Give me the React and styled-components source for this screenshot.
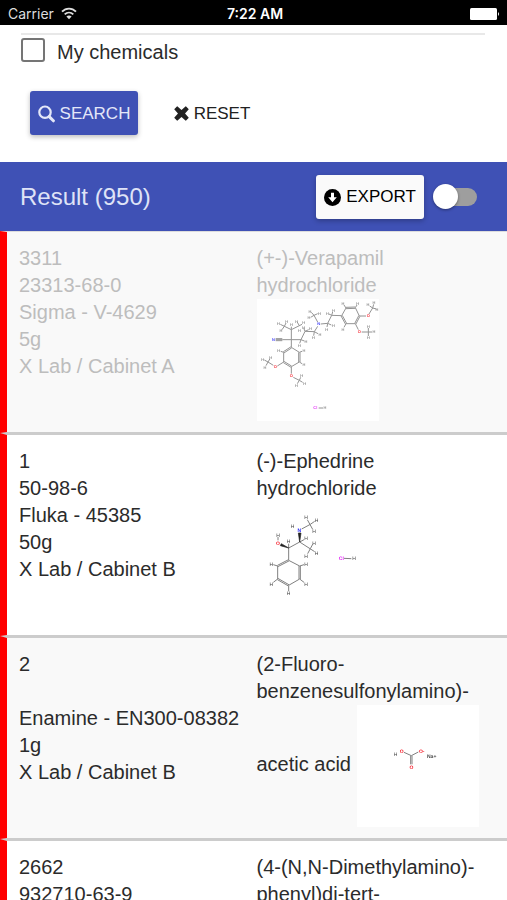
import { useState } from 'react';
import styled, { createGlobalStyle, css } from 'styled-components';

const ATOM_COLORS = { H: '#444', O: '#f5202c', 'O-': '#f5202c', N: '#2020f5', Cl: '#e020f5', 'Na+': '#444' };

// coordinates are in thirds of a pixel, counted from origin
const STRUCTURE_SIZE = 122;
const UNITS = 3;

// bonds: [x1, y1, x2, y2, order], atoms: [label, x, y]
const verapamil = {
  origin: [21, 27],
  labelSize: 4,
  bonds: [
    [124, 172, 148, 187, 1], [148, 187, 148, 216, 2], [148, 216, 124, 230, 1],
    [124, 230, 101, 216, 2], [101, 216, 101, 187, 1], [101, 187, 124, 172, 2],
    [101, 187, 92, 184, 1], [148, 187, 156, 184, 1], [148, 216, 156, 221, 1],
    [101, 216, 82, 228, 1], [70, 226, 54, 216, 1], [54, 216, 43, 210, 1],
    [54, 216, 60, 206, 1], [54, 216, 48, 227, 1],
    [124, 230, 124, 251, 1], [130, 262, 148, 271, 1], [148, 271, 152, 262, 1],
    [148, 271, 158, 277, 1], [148, 271, 142, 281, 1],
    [124, 172, 124, 119, 1], [97, 149, 124, 149, 1], [77, 149, 97, 149, 3],
    [124, 119, 124, 110, 1], [124, 119, 91, 103, 1], [103, 109, 108, 99, 1], [103, 109, 96, 119, 1],
    [124, 119, 156, 103, 1], [148, 107, 142, 97, 1],
    [124, 149, 153, 149, 1], [153, 149, 163, 153, 1], [153, 149, 149, 160, 1],
    [153, 149, 165, 124, 1], [165, 124, 161, 114, 1], [165, 124, 176, 119, 1],
    [165, 124, 193, 125, 1], [193, 125, 191, 137, 1], [193, 125, 204, 131, 1],
    [193, 125, 203, 109, 1], [203, 96, 192, 76, 1], [192, 76, 184, 67, 1],
    [192, 76, 203, 71, 1], [192, 76, 182, 82, 1],
    [212, 102, 233, 100, 1], [233, 100, 231, 111, 1], [233, 100, 244, 105, 1],
    [233, 100, 245, 76, 1], [245, 76, 248, 66, 1], [245, 76, 237, 72, 1],
    [245, 76, 275, 77, 1], [275, 77, 288, 54, 1], [288, 54, 316, 53, 2],
    [316, 53, 328, 78, 1], [328, 78, 316, 101, 2], [316, 101, 288, 101, 1], [288, 101, 275, 77, 2],
    [288, 54, 282, 45, 1], [316, 53, 321, 45, 1], [288, 101, 282, 112, 1],
    [328, 78, 348, 78, 1], [357, 72, 368, 54, 1], [368, 54, 359, 48, 1],
    [368, 54, 371, 43, 1], [368, 54, 379, 57, 1],
    [316, 101, 325, 119, 1], [335, 126, 366, 126, 1], [355, 114, 355, 138, 1],
    [206, 354, 219, 354, 1],
  ],
  atoms: [
    ['H', 86, 182], ['H', 162, 182], ['H', 162, 225], ['O', 76, 231], ['H', 38, 208],
    ['H', 62, 202], ['H', 45, 232], ['O', 124, 258], ['H', 155, 257], ['H', 164, 280],
    ['H', 139, 286], ['N', 70, 150], ['H', 124, 105], ['H', 85, 101], ['H', 110, 94],
    ['H', 93, 122], ['H', 140, 94], ['H', 161, 99], ['H', 148, 122], ['H', 168, 155],
    ['H', 148, 166], ['H', 161, 112], ['H', 181, 117], ['H', 190, 143], ['H', 210, 134],
    ['N', 206, 102], ['H', 180, 64], ['H', 208, 70], ['H', 177, 84], ['H', 230, 118],
    ['H', 250, 107], ['H', 250, 62], ['H', 232, 70], ['H', 279, 40], ['H', 323, 40],
    ['H', 279, 118], ['O', 355, 78], ['H', 354, 45], ['H', 372, 38], ['H', 381, 60],
    ['O', 328, 126], ['H', 355, 109], ['H', 372, 126], ['H', 355, 143],
    ['Cl', 196, 354], ['H', 225, 354],
  ],
};

const ephedrine = {
  origin: [21, 22],
  labelSize: 5,
  bonds: [
    [116, 197, 149, 214, 1], [149, 214, 149, 253, 2], [149, 253, 116, 272, 1],
    [116, 272, 83, 253, 2], [83, 253, 83, 214, 1], [83, 214, 116, 197, 2],
    [83, 214, 70, 210, 1], [149, 214, 162, 210, 1], [149, 253, 162, 263, 1],
    [83, 253, 70, 263, 1], [116, 272, 116, 290, 1],
    [116, 197, 116, 147, 1], [116, 160, 149, 142, 1], [149, 142, 162, 135, 1],
    [149, 142, 194, 171, 1], [181, 162, 188, 149, 1], [181, 162, 173, 177, 1],
    [155, 103, 181, 89, 1], [172, 75, 188, 104, 1], [181, 89, 194, 80, 1],
    [84, 127, 84, 137, 1], [282, 191, 304, 192, 1],
  ],
  wedges: ['116,160 94,147 91,153', '149,142 145,115 153,115'],
  atoms: [
    ['H', 64, 208], ['H', 168, 208], ['H', 168, 268], ['H', 116, 297], ['H', 64, 268],
    ['H', 116, 140], ['O', 84, 145], ['H', 84, 121], ['H', 168, 131], ['N', 148, 107],
    ['H', 128, 96], ['H', 168, 69], ['H', 200, 77], ['H', 192, 110], ['H', 192, 145],
    ['H', 200, 175], ['H', 168, 184], ['Cl', 274, 191], ['H', 312, 192],
  ],
};

const bicarbonate = {
  origin: [20, 14],
  labelSize: 5,
  bonds: [[161, 156, 183, 166, 1], [183, 166, 204, 155, 1], [183, 166, 183, 192, 2]],
  atoms: [['H', 136, 162], ['O', 154, 152], ['O-', 214, 152], ['O', 183, 201], ['Na+', 244, 169]],
};

const chemicals = [
  {
    id: '3311', cas: '23313-68-0', supplier: 'Sigma - V-4629', amount: '5g',
    location: 'X Lab / Cabinet A', name: '(+-)-Verapamil hydrochloride', structure: verapamil, faded: true,
  },
  {
    id: '1', cas: '50-98-6', supplier: 'Fluka - 45385', amount: '50g',
    location: 'X Lab / Cabinet B', name: '(-)-Ephedrine hydrochloride', structure: ephedrine,
  },
  {
    id: '2', cas: '', supplier: 'Enamine - EN300-08382', amount: '1g',
    location: 'X Lab / Cabinet B', name: '(2-Fluoro-benzenesulfonylamino)-acetic acid', structure: bicarbonate,
  },
  { id: '2662', cas: '932710-63-9', name: '(4-(N,N-Dimethylamino)-phenyl)di-tert-' },
];

function Bond({ bond }) {
  const [x1, y1, x2, y2, order] = bond;
  const length = Math.hypot(x2 - x1, y2 - y1);
  const nx = (y1 - y2) / length;
  const ny = (x2 - x1) / length;
  const offsets = { 1: [0], 2: [-2, 2], 3: [-3, 0, 3] }[order];
  return offsets.map((o) => (
    <line key={o} x1={x1 + nx * o} y1={y1 + ny * o} x2={x2 + nx * o} y2={y2 + ny * o} />
  ));
}

function Molecule({ structure, faded }) {
  const { origin, labelSize, bonds, wedges, atoms } = structure;
  const [left, top] = origin;
  return (
    <Structure viewBox={`0 0 ${STRUCTURE_SIZE} ${STRUCTURE_SIZE}`} aria-hidden="true">
      <rect width={STRUCTURE_SIZE} height={STRUCTURE_SIZE} fill="#fff" />
      <g opacity={faded ? 0.85 : 1}>
        <g transform={`scale(${1 / UNITS}) translate(${-left} ${-top})`}>
          <g stroke="#808080" strokeWidth="3">
            {bonds.map((bond) => (
              <Bond key={bond.join()} bond={bond} />
            ))}
          </g>
          {wedges?.map((points) => (
            <polygon key={points} points={points} fill="#222" stroke="#222" strokeWidth="2" />
          ))}
        </g>
        {atoms.map(([label, x, y]) => (
          <AtomLabel
            key={`${x}-${y}`}
            x={(x - left) / UNITS}
            y={(y - top) / UNITS + labelSize * 0.36}
            fill={ATOM_COLORS[label]}
            $size={labelSize}
            $bold={label !== 'H'}
          >
            {label}
          </AtomLabel>
        ))}
      </g>
    </Structure>
  );
}

function SearchIcon() {
  return (
    <svg width="17" height="18" viewBox="0 0 17 18" fill="none" stroke="currentColor" aria-hidden="true">
      <circle cx="7" cy="7.2" r="5.7" strokeWidth="2.2" />
      <path d="M11.2 11.6 L15.4 15.8" strokeWidth="3" strokeLinecap="round" />
    </svg>
  );
}

function RemoveIcon() {
  return (
    <svg width="15" height="15" viewBox="0 0 14 14" aria-hidden="true">
      <path
        d="M3.3 .4 L7 3.7 L10.7 .4 Q11 .1 11.3 .4 L13.6 2.7 Q13.9 3 13.6 3.3 L10.3 7 L13.6 10.7 Q13.9 11 13.6 11.3 L11.3 13.6 Q11 13.9 10.7 13.6 L7 10.3 L3.3 13.6 Q3 13.9 2.7 13.6 L.4 11.3 Q.1 11 .4 10.7 L3.7 7 L.4 3.3 Q.1 3 .4 2.7 L2.7 .4 Q3 .1 3.3 .4 Z"
        fill="currentColor"
      />
    </svg>
  );
}

function DownloadIcon() {
  return (
    <svg width="17" height="17" viewBox="0 0 17 17" aria-hidden="true">
      <circle cx="8.5" cy="8.5" r="8.5" fill="currentColor" />
      <path d="M7 3.8 H10 V8.2 H12.8 L8.5 13.2 L4.2 8.2 H7 Z" fill="#fff" />
    </svg>
  );
}

function WifiIcon() {
  return (
    <svg width="16" height="13" viewBox="0 0 16 13" fill="none" stroke="currentColor" strokeWidth="1.9" aria-hidden="true">
      <path d="M1 4.7 C5 .6 11 .6 15 4.7" />
      <path d="M3.7 7.4 C6.2 5 9.8 5 12.3 7.4" />
      <path d="M8 12.2 L5.4 9.4 C6.9 8.1 9.1 8.1 10.6 9.4 Z" fill="currentColor" stroke="none" />
    </svg>
  );
}

function BatteryIcon() {
  return (
    <svg width="30" height="12" viewBox="0 0 30 12" fill="currentColor" aria-hidden="true">
      <rect width="27" height="12" rx="1.5" />
      <path d="M28 4 Q30 6 28 8 Z" />
    </svg>
  );
}

function ChemicalRow({ chemical }) {
  const { id, cas, supplier, amount, location, name, structure, faded } = chemical;
  return (
    <Row $faded={faded}>
      <Cell>
        {[id, cas, supplier, amount, location].map((line, index) => (
          <Line key={index}>{line}</Line>
        ))}
      </Cell>
      <Cell>
        {name} {structure && <Molecule structure={structure} faded={faded} />}
      </Cell>
    </Row>
  );
}

function App() {
  const [mine, setMine] = useState(false);
  const [expanded, setExpanded] = useState(false);

  return (
    <Screen>
      <GlobalStyle />
      <StatusBar>
        <Carrier>
          Carrier
          <WifiIcon />
        </Carrier>
        <Clock>7:22 AM</Clock>
        <Battery>
          <BatteryIcon />
        </Battery>
      </StatusBar>
      <SearchForm onSubmit={(e) => e.preventDefault()}>
        <Divider />
        <CheckLabel>
          <Checkbox type="checkbox" checked={mine} onChange={(e) => setMine(e.target.checked)} />
          My chemicals
        </CheckLabel>
        <FormButtons>
          <Button type="submit" $variant="primary">
            <SearchIcon />
            SEARCH
          </Button>
          <Button type="button" onClick={() => setMine(false)}>
            <RemoveIcon />
            RESET
          </Button>
        </FormButtons>
      </SearchForm>
      <Toolbar>
        <Title id="result-title">Result (950)</Title>
        <Button type="button" $variant="raised">
          <DownloadIcon />
          EXPORT
        </Button>
        <Switch
          type="checkbox"
          role="switch"
          aria-label="Toggle view"
          checked={expanded}
          onChange={(e) => setExpanded(e.target.checked)}
        />
      </Toolbar>
      <Table aria-labelledby="result-title">
        <tbody>
          {chemicals.map((chemical) => (
            <ChemicalRow key={chemical.id} chemical={chemical} />
          ))}
        </tbody>
      </Table>
    </Screen>
  );
}

export default App;

const GlobalStyle = createGlobalStyle`
  * {
    box-sizing: border-box;
  }

  body {
    margin: 0;
    background: #fff;
    color: #2b2b2b;
    font-family: 'Liberation Sans', Arial, sans-serif;
    font-size: 20px;
    line-height: 27px;
  }
`;

const Screen = styled.main`
  height: 100vh;
  overflow: hidden;
`;

const StatusBar = styled.header`
  display: grid;
  grid-template-columns: 1fr auto 1fr;
  align-items: center;
  height: 25px;
  padding: 2px 7px 0 8px;
  background: #000;
  color: #fff;
  font-family: Inter, sans-serif;
  font-size: 14px;
  line-height: 20px;
`;

const Carrier = styled.span`
  display: flex;
  align-items: center;
  gap: 7px;
  color: #ddd;
`;

const Clock = styled.span`
  padding-left: 2px;
  font-weight: 600;
`;

const Battery = styled.span`
  display: flex;
  justify-content: flex-end;
`;

const SearchForm = styled.form`
  padding: 8px 22px 27px 21px;
`;

const Divider = styled.hr`
  height: 2px;
  margin: 0 0 3px;
  border: 0;
  background: #e8e8e8;
`;

const CheckLabel = styled.label`
  display: flex;
  align-items: flex-start;
  gap: 12px;
  width: fit-content;
  line-height: 28px;
`;

const Checkbox = styled.input`
  appearance: none;
  width: 24px;
  height: 24px;
  margin: 0;
  border: 2px solid #757575;
  border-radius: 3px;
  &:checked {
    background: #3f51b5;
  }
`;

const FormButtons = styled.div`
  display: flex;
  gap: 20px;
  margin: 25px 0 0 9px;
`;

const variants = {
  primary: css`
    background: #3f51b5;
    color: #e4e7f8;
    box-shadow: 0 2px 5px rgba(0, 0, 0, 0.26);
  `,
  raised: css`
    background: #fafafa;
    color: #000;
    box-shadow: 0 2px 5px rgba(0, 0, 0, 0.26);
  `,
};

const Button = styled.button`
  display: flex;
  align-items: center;
  justify-content: center;
  gap: 5px;
  min-width: 108px;
  height: 44px;
  padding: 1px 7px 0;
  border: 0;
  border-radius: 3px;
  background: transparent;
  color: #212121;
  font-family: inherit;
  font-size: 17px;
  line-height: 20px;
  ${({ $variant }) => variants[$variant]}
`;

const Toolbar = styled.div`
  display: flex;
  align-items: center;
  height: 69px;
  padding: 0 30px 0 20px;
  background: #3f51b5;
`;

const Title = styled.h2`
  flex: 1;
  margin: 0;
  color: #dfe3f7;
  font-size: 24px;
  font-weight: 400;
`;

const Switch = styled.input`
  appearance: none;
  position: relative;
  width: 44px;
  height: 26px;
  margin: 0 0 0 9px;
  padding: 4px 0 4px 6px;
  &::before {
    content: '';
    display: block;
    height: 18px;
    border-radius: 9px;
    background: #9e9e9e;
  }
  &::after {
    content: '';
    position: absolute;
    top: 0;
    left: 0;
    width: 25px;
    height: 25px;
    border-radius: 50%;
    background: #fff;
    box-shadow: 0 1px 3px rgba(0, 0, 0, 0.4);
  }
  &:checked::after {
    left: 19px;
  }
`;

const Table = styled.table`
  width: 100%;
  table-layout: fixed;
  border-spacing: 0;
`;

const Cell = styled.td`
  width: 50%;
  padding: 13px 0 11px;
  border: solid #ccc;
  border-width: 2px 0 1px;
  vertical-align: top;
  &:first-child {
    padding-left: 12px;
    border-left: 7px solid #f00;
  }
  &:last-child {
    padding-left: 3px;
    padding-right: 12px;
  }
`;

const Row = styled.tr`
  color: ${({ $faded }) => ($faded ? '#bdbdbd' : 'inherit')};
  &:nth-child(odd) {
    background: #f9f9f9;
  }
  &:first-child ${Cell} {
    border-top: 1px solid #ddd;
  }
`;

const Line = styled.div`
  min-height: 27px;
`;

const Structure = styled.svg`
  width: 122px;
  height: 122px;
  vertical-align: middle;
  will-change: transform;
`;

const AtomLabel = styled.text`
  font-size: ${({ $size }) => $size}px;
  font-weight: ${({ $bold }) => ($bold ? 700 : 400)};
  line-height: 1;
  text-anchor: middle;
  text-rendering: geometricPrecision;
`;
